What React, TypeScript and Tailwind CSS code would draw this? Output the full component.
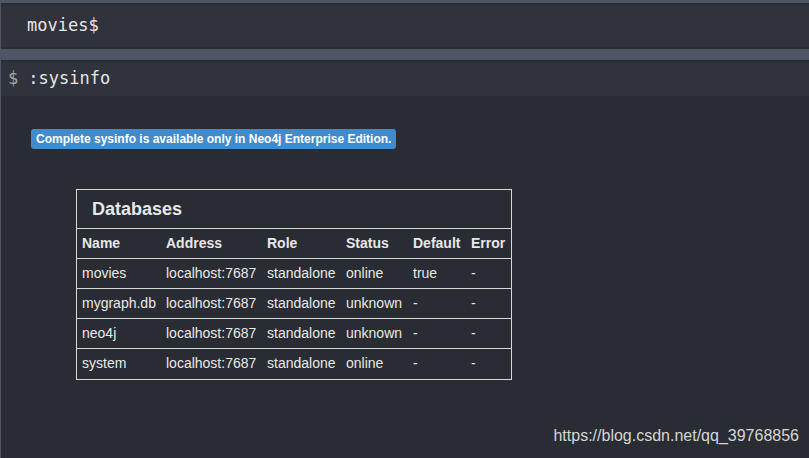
import React from 'react';

const ROWS = [
  ['movies', 'localhost:7687', 'standalone', 'online', 'true', '-'],
  ['mygraph.db', 'localhost:7687', 'standalone', 'unknown', '-', '-'],
  ['neo4j', 'localhost:7687', 'standalone', 'unknown', '-', '-'],
  ['system', 'localhost:7687', 'standalone', 'online', '-', '-'],
];

const HEADERS = ['Name', 'Address', 'Role', 'Status', 'Default', 'Error'];

export default function App() {
  return (
    <div className="w-[809px] h-[458px] overflow-hidden bg-[#4e5565] flex flex-col pt-[3px]">
      {/* Editor */}
      <div className="h-[46px] ml-px bg-[#30333b] border-y-2 border-[#2a2d34] flex items-center pl-[26px] shrink-0">
        <span className="font-['DejaVu_Sans_Mono',monospace] text-[17px] text-[#e6e6e6]">movies$</span>
      </div>

      <div className="h-[11px] shrink-0" />

      {/* Result frame */}
      <div className="flex-1 ml-px bg-[#292c33] border-t-2 border-[#2a2d34] flex flex-col">
        <div className="h-[34px] bg-[#30333b] flex items-center pl-[7px] font-['DejaVu_Sans_Mono',monospace] text-[17px] shrink-0">
          <span className="text-[#9fa3ab]">$</span>
          <span className="text-[#e6e6e6] ml-[10px]">:sysinfo</span>
        </div>

        <div className="relative flex-1 pl-[30px] pt-[30px] font-['Liberation_Sans',Arial,sans-serif]">
          <div className="inline-flex items-center h-[20px] px-[5px] rounded-[3px] bg-[#418bcd] text-white text-[12px] font-bold">
            Complete sysinfo is available only in Neo4j Enterprise Edition.
          </div>

          <div className="ml-[45px] mt-[39px] w-[436px] border border-[#d8d8d8] text-[#e8e8e8] text-[14px]">
            <div className="h-[38px] flex items-center pl-[15px] text-[18px] font-bold">Databases</div>
            <table className="w-full border-collapse">
              <thead>
                <tr className="h-[30px] border-t border-[#d8d8d8] font-bold">
                  {HEADERS.map((h, i) => (
                    <th
                      key={h}
                      className={`text-left font-bold p-0 ${
                        ['pl-[5px] w-[89px]', 'w-[101px]', 'w-[79px]', 'w-[67px]', 'w-[58px]', ''][i]
                      }`}
                    >
                      {h}
                    </th>
                  ))}
                </tr>
              </thead>
              <tbody>
                {ROWS.map((r) => (
                  <tr key={r[0]} className="h-[30px] border-t border-[#d8d8d8]">
                    {r.map((c, i) => (
                      <td key={i} className={`p-0 ${i === 0 ? 'pl-[5px]' : ''}`}>
                        {c}
                      </td>
                    ))}
                  </tr>
                ))}
              </tbody>
            </table>
          </div>

          <div className="absolute right-[10px] bottom-[10px] text-[16px] text-[#d6d6d6] font-['Liberation_Sans',Arial,sans-serif]">
            https://blog.csdn.net/qq_39768856
          </div>
        </div>
      </div>
    </div>
  );
}
